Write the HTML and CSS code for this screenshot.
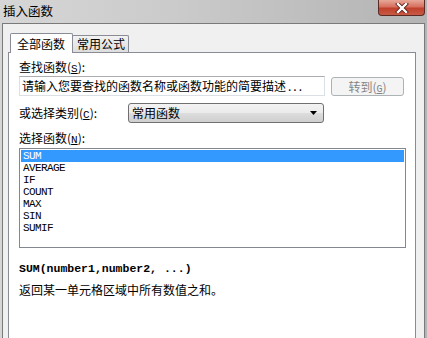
FILE: index.html
```html
<!DOCTYPE html>
<html lang="zh-CN">
<head>
<meta charset="utf-8">
<title>插入函数</title>
<link rel="stylesheet" href="styles.css">
</head>
<body>
<div class="window">
  <div class="titlebar">
    <span class="title">插入函数</span>
    <div class="close">
      <svg width="14" height="10" viewBox="0 0 14 10">
        <path d="M3 1 L11 9 M11 1 L3 9" stroke="#5a1a14" stroke-width="4" stroke-linecap="square"/>
        <path d="M3 1 L11 9 M11 1 L3 9" stroke="#ffffff" stroke-width="2.4" stroke-linecap="square"/>
      </svg>
    </div>
  </div>
  <div class="client">
    <div class="tabs">
      <div class="tab active">全部函数</div>
      <div class="tab">常用公式</div>
    </div>
    <div class="panel">
      <div class="label">查找函数(<u>S</u>):</div>
      <div class="row search-row">
        <div class="input">请输入您要查找的函数名称或函数功能的简要描述<span class="dots">...</span></div>
        <div class="btn">转到(<u>G</u>)</div>
      </div>
      <div class="row cat-row">
        <div class="label cat-label">或选择类别(<u>C</u>):</div>
        <div class="select">
          <span>常用函数</span>
          <svg class="arrow" width="7" height="4" viewBox="0 0 7 4"><path d="M0 0 H7 L3.5 4 Z" fill="#000"/></svg>
        </div>
      </div>
      <div class="label list-label">选择函数(<u>N</u>):</div>
      <div class="list">
        <div class="item selected">SUM</div>
        <div class="item">AVERAGE</div>
        <div class="item">IF</div>
        <div class="item">COUNT</div>
        <div class="item">MAX</div>
        <div class="item">SIN</div>
        <div class="item">SUMIF</div>
      </div>
      <div class="formula">SUM(number1,number2, ...)</div>
      <div class="desc">返回某一单元格区域中所有数值之和。</div>
    </div>
  </div>
</div>
</body>
</html>
```
FILE: styles.css
```css
html, body {
  margin: 0;
  padding: 0;
}
body {
  width: 427px;
  height: 338px;
  overflow: hidden;
  background: #c4c4c4;
  font-family: "Noto Sans CJK SC", "Liberation Sans", sans-serif;
  font-size: 12px;
  color: #000;
}
.window {
  height: 338px;
  display: flex;
  flex-direction: column;
  background: linear-gradient(to right, #d6d6d6 0%, #cbcbcb 40%, #bdbdbd 75%, #b4b4b4 100%);
}
.titlebar {
  height: 23px;
  display: flex;
  align-items: flex-start;
  flex: none;
}
.title {
  padding-left: 3px;
  line-height: 21px;
  font-size: 12.5px;
  color: #000;
}
.close {
  margin-left: auto;
  margin-right: 2px;
  width: 45px;
  height: 15px;
  border: 1px solid #5b2a24;
  border-top: none;
  border-radius: 0 0 4px 4px;
  background: linear-gradient(to bottom, #e8a89a 0%, #d7705f 45%, #c0402c 55%, #c85a44 100%);
  display: flex;
  align-items: center;
  justify-content: center;
}
.client {
  flex: 1;
  margin: 0 2px;
  border: 1px solid #7a7a7a;
  border-bottom: none;
  background: #f0f0f0;
  padding: 9px 8px 0 5px;
  display: flex;
  flex-direction: column;
  min-height: 0;
}
.tabs {
  display: flex;
  align-items: flex-end;
  height: 20px;
  margin-bottom: -1px;
  flex: none;
}
.tab {
  box-sizing: border-box;
  border: 1px solid #898c95;
  border-bottom: none;
  line-height: 16px;
}
.tab.active {
  position: relative;
  z-index: 1;
  margin-left: 2px;
  width: 63px;
  height: 20px;
  padding: 2px 0 0 6px;
  background: #ffffff;
  border-radius: 2px 2px 0 0;
}
.tab:not(.active) {
  margin-left: -1px;
  width: 57px;
  height: 18px;
  padding: 0 0 0 4px;
  background: linear-gradient(to bottom, #f2f2f2, #dcdcdc);
  border-radius: 2px 2px 0 0;
}
.panel {
  flex: 1;
  border: 1px solid #898c95;
  border-bottom: none;
  background: #ffffff;
  padding: 7px 9px 0 10px;
  min-height: 0;
}
.label {
  line-height: 14px;
  height: 14px;
  white-space: nowrap;
}
.label u {
  font-family: "Liberation Mono", monospace;
  font-size: 11px;
}
.row {
  display: flex;
  align-items: center;
}
.search-row {
  margin-top: 2px;
}
.input {
  box-sizing: border-box;
  width: 306px;
  height: 20px;
  border: 1px solid #dbdfe6;
  border-top-color: #abadb3;
  padding-left: 2px;
  line-height: 18px;
  white-space: nowrap;
  overflow: hidden;
  background: #fff;
}
.dots {
  letter-spacing: 2px;
  padding-left: 2px;
}
.btn {
  box-sizing: border-box;
  margin-left: 6px;
  width: 73px;
  height: 19px;
  border: 1px solid #adb2b5;
  border-radius: 3px;
  background: #f4f4f4;
  color: #858585;
  text-align: center;
  line-height: 17px;
  font-size: 12px;
}
.btn u {
  font-family: "Liberation Mono", monospace;
  font-size: 10px;
}
.cat-row {
  margin-top: 7px;
}
.cat-label {
  width: 109px;
}
.select {
  box-sizing: border-box;
  width: 196px;
  height: 20px;
  border: 1px solid #707070;
  border-radius: 3px;
  background: linear-gradient(to bottom, #f3f3f3 0%, #ebebeb 50%, #dddddd 51%, #cfcfcf 100%);
  padding: 0 6px 0 3px;
  display: flex;
  align-items: center;
  justify-content: space-between;
  line-height: 18px;
}
.list-label {
  margin-top: 8px;
}
.list {
  box-sizing: border-box;
  margin-top: 3px;
  height: 100px;
  border: 1px solid #828790;
  padding: 1px;
  background: #fff;
}
.item {
  height: 12px;
  line-height: 12px;
  padding-left: 2px;
  font-family: "Liberation Mono", monospace;
  font-size: 11px;
  letter-spacing: -0.6px;
  color: #000;
}
.item.selected {
  background: #3399ff;
  color: #fff;
}
.formula {
  margin-top: 14px;
  line-height: 14px;
  font-family: "Liberation Mono", monospace;
  font-weight: bold;
  font-size: 11.5px;
  white-space: nowrap;
}
.desc {
  margin-top: 7px;
  line-height: 14px;
  white-space: nowrap;
}
```
